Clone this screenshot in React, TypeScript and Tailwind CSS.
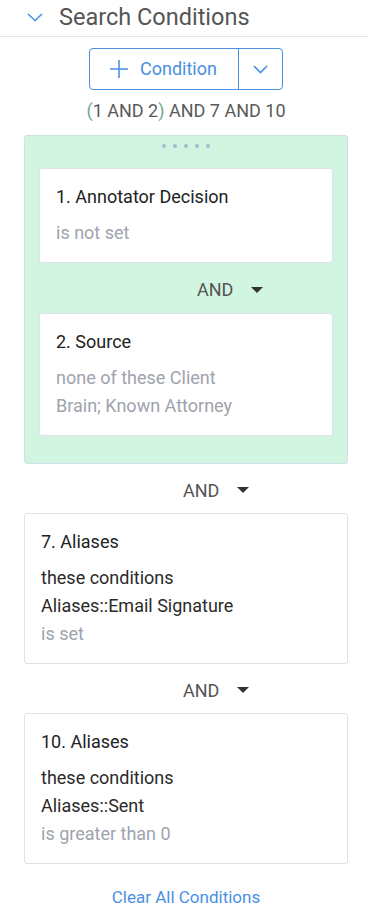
import React from "react";

const Caret = () => (
  <svg width="12" height="7" viewBox="0 0 12 7" className="ml-[18px]">
    <path d="M0 0 L12 0 L6 6 Z" fill="#333" />
  </svg>
);

const AndRow = ({ cls }: { cls: string }) => (
  <div className={`flex items-center ${cls}`}>
    <span className="text-[18px] leading-[24px] text-[#555]">AND</span>
    <Caret />
  </div>
);

const Card = ({
  title,
  dark = [],
  gray = [],
}: {
  title: string;
  dark?: string[];
  gray?: string[];
}) => (
  <div className="rounded-[3px] border border-[#dde3ec] bg-white pl-[16px] pr-[12px] pt-[16px] pb-[15px]">
    <div className="text-[18px] leading-[24px] text-[#222]">{title}</div>
    <div className="mt-[10px]">
      {dark.map((d) => (
        <div key={d} className="text-[18px] leading-[28px] text-[#2a2a2a]">
          {d}
        </div>
      ))}
      {gray.map((g) => (
        <div key={g} className="text-[18px] leading-[28px] text-[#9ea3ad]">
          {g}
        </div>
      ))}
    </div>
  </div>
);

export default function App() {
  return (
    <div
      className="w-[368px] min-h-[904px] bg-white"
      style={{ fontFamily: "Roboto, 'Noto Sans', sans-serif" }}
    >
      <div className="flex h-[37px] items-center border-b border-[#dfe7f0] pl-[27px] pb-[2px]">
        <svg width="16" height="9" viewBox="0 0 16 9" fill="none">
          <path d="M1 1 L8 7.5 L15 1" stroke="#4a90e2" strokeWidth="1.6" />
        </svg>
        <span className="ml-[16px] text-[23.5px] leading-[28px] text-[#555]">
          Search Conditions
        </span>
      </div>
      <div className="flex flex-col pl-[24px] pr-[20px]">
        <div className="mt-[11px] flex justify-center">
          <div className="flex h-[42px] rounded-[4px] border border-[#4a90e2]">
            <div className="flex w-[149px] items-center justify-center gap-[11px] border-r border-[#4a90e2] pr-[2px]">
              <svg width="20" height="20" viewBox="0 0 20 20" fill="none">
                <path d="M10 1 V19 M1 10 H19" stroke="#4a90e2" strokeWidth="1.6" />
              </svg>
              <span className="text-[18px] leading-[24px] text-[#4a90e2]">Condition</span>
            </div>
            <div className="flex w-[43px] items-center justify-center">
              <svg width="15" height="9" viewBox="0 0 15 9" fill="none">
                <path d="M1 1 L7.5 7.5 L14 1" stroke="#4a90e2" strokeWidth="1.6" />
              </svg>
            </div>
          </div>
        </div>
        <div className="mt-[9px] text-center text-[18px] leading-[24px] text-[#5a5a5a]">
          <span className="text-[#6fa88f]">(</span>1 AND 2
          <span className="text-[#6fa88f]">)</span> AND 7 AND 10
        </div>
        <div className="mt-[12px] rounded-[3px] border border-[#cfe0e6] bg-[#d2f5e2] px-[14px] pt-[8px] pb-[27px]">
          <div className="flex h-[4px] justify-center gap-[7px]">
            {[0, 1, 2, 3, 4].map((i) => (
              <div key={i} className="h-[4px] w-[4px] rounded-full bg-[#a9b9cf]" />
            ))}
          </div>
          <div className="mt-[20px]">
            <Card title="1. Annotator Decision" gray={["is not set"]} />
          </div>
          <AndRow cls="h-[50px] pt-[4px] pl-[158px]" />
          <Card title="2. Source" gray={["none of these Client", "Brain; Known Attorney"]} />
        </div>
        <AndRow cls="h-[49px] pt-[4px] pl-[159px]" />
        <Card
          title="7. Aliases"
          dark={["these conditions", "Aliases::Email Signature"]}
          gray={["is set"]}
        />
        <AndRow cls="h-[49px] pt-[4px] pl-[159px]" />
        <Card
          title="10. Aliases"
          dark={["these conditions", "Aliases::Sent"]}
          gray={["is greater than 0"]}
        />
        <div className="mt-[23px] text-center text-[17px] leading-[20px] text-[#4a90e2]">
          Clear All Conditions
        </div>
      </div>
    </div>
  );
}
